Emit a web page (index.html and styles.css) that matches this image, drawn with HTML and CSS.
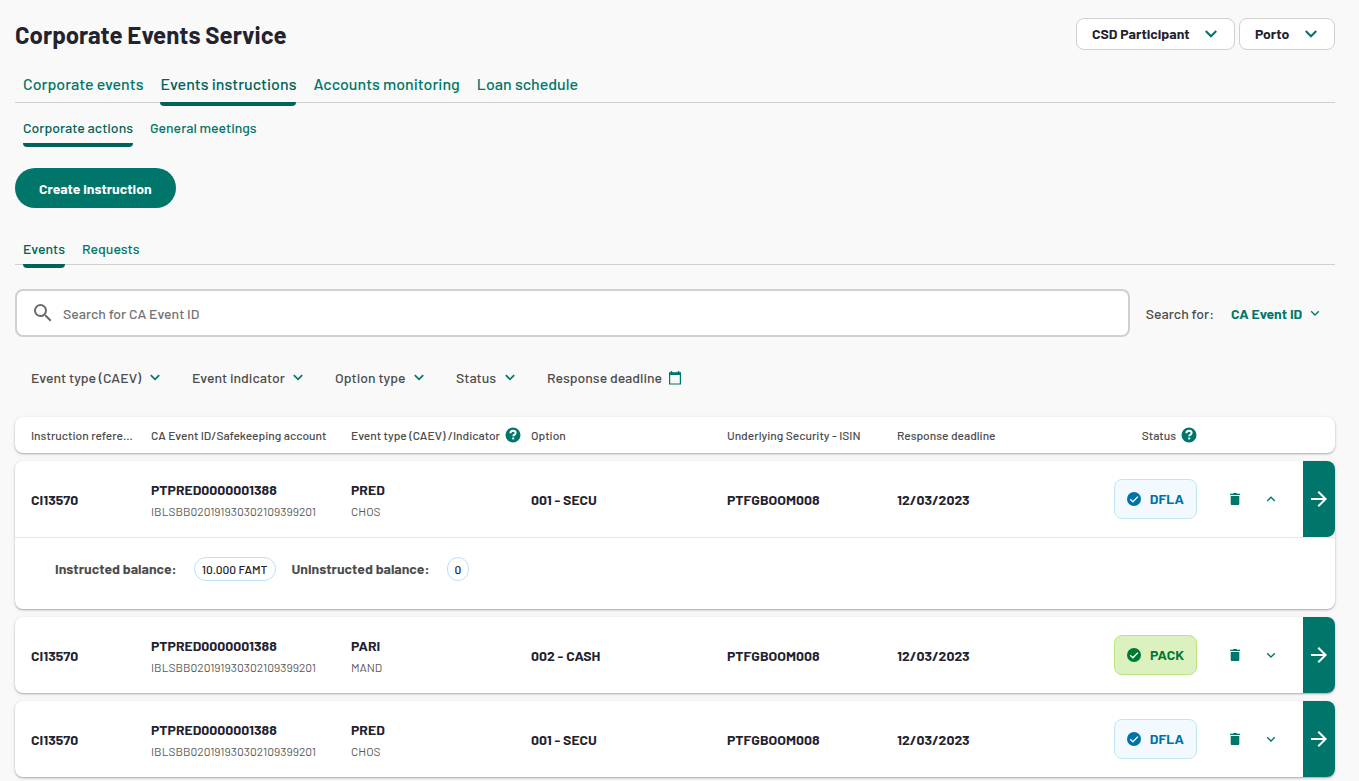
FILE: index.html
```html
<!DOCTYPE html>
<html lang="en">
<head>
<meta charset="utf-8">
<meta name="viewport" content="width=device-width, initial-scale=1">
<title>Corporate Events Service</title>
<link rel="stylesheet" href="styles.css">
</head>
<body>
<svg class="sprite" aria-hidden="true">
  <symbol id="chevron" viewBox="0 0 12 12"><path d="M1.500 3.500 6 8l4.500-4.500" fill="none" stroke="currentColor" stroke-width="1.800"/></symbol>
  <symbol id="chevron-filter" viewBox="0 0 12 12"><path d="M1.800 3.200 6 7.300l4.200-4.100" fill="none" stroke="currentColor" stroke-width="1.700"/></symbol>
  <symbol id="chevron-up" viewBox="0 0 12 12"><path d="M2.200 8 6 4.200 9.800 8" fill="none" stroke="currentColor" stroke-width="1.300"/></symbol>
  <symbol id="chevron-down" viewBox="0 0 12 12"><path d="M2.200 4.200 6 8l3.800-3.800" fill="none" stroke="currentColor" stroke-width="1.300"/></symbol>
  <symbol id="search" viewBox="0 0 24 24"><path d="M15.500 14h-.79l-.28-.27A6.470 6.470 0 0 0 16 9.500 6.500 6.500 0 1 0 9.500 16c1.610 0 3.090-.59 4.230-1.570l.27.28v.79l5 4.990L20.490 19l-4.990-5zm-6 0a4.500 4.500 0 1 1 0-9 4.500 4.500 0 0 1 0 9z" fill="currentColor"/></symbol>
  <symbol id="calendar" viewBox="0 0 14 14"><path d="M3.500 0v2M10.500 0v2" stroke="currentColor" stroke-width="1.400"/><path d="M1.600 2h10.800v11H1.600z" fill="none" stroke="currentColor" stroke-width="1.200"/><path d="M1 1.400h12V4H1z" fill="currentColor"/></symbol>
  <symbol id="help" viewBox="0 0 16 16"><circle cx="8" cy="8" r="7.500" fill="currentColor"/><path d="M5.400 6.200C5.400 4.600 6.500 3.700 8 3.700s2.600.9 2.600 2.200c0 1.600-2.300 1.800-2.400 3.400" fill="none" stroke="#fff" stroke-width="2"/><path d="M7.200 10.500h2v1.900h-2z" fill="#fff"/></symbol>
  <symbol id="check" viewBox="0 0 14 14"><circle cx="7" cy="7" r="7" fill="currentColor"/><path d="M3.200 7.200 5.900 9.800l5-5.200" fill="none" stroke="#fff" stroke-width="1.300"/></symbol>
  <symbol id="trash" viewBox="0 0 10 12"><path d="M0 .7h2.800L3.500 0h3l.7.7H10V2H0zM.7 3h8.600v7.700c0 .7-.6 1.300-1.300 1.300H2c-.7 0-1.300-.6-1.300-1.300z" fill="currentColor"/></symbol>
  <symbol id="arrow" viewBox="0 0 16 16"><path d="M0 8h14.600M7.300.700 14.600 8l-7.300 7.300" fill="none" stroke="currentColor" stroke-width="2"/></symbol>
</svg>
<main class="page">
  <header class="header">
    <h1 class="title">Corporate Events Service</h1>
    <div class="context">
      <span class="picker picker--boxed">
        <select aria-label="Role"><option>CSD Participant</option></select>
        <svg class="picker-icon"><use href="#chevron"/></svg>
      </span>
      <span class="picker picker--boxed">
        <select aria-label="Location"><option>Porto</option></select>
        <svg class="picker-icon"><use href="#chevron"/></svg>
      </span>
    </div>
  </header>

  <nav class="tabs tabs--main" aria-label="Sections">
    <a class="tab" href="#">Corporate events</a>
    <a class="tab tab--active" href="#" aria-current="page">Events instructions</a>
    <a class="tab" href="#">Accounts monitoring</a>
    <a class="tab" href="#">Loan schedule</a>
  </nav>
  <nav class="tabs tabs--sub" aria-label="Instruction types">
    <a class="tab tab--active" href="#" aria-current="page">Corporate actions</a>
    <a class="tab" href="#">General meetings</a>
  </nav>

  <button class="create" type="button">Create instruction</button>

  <nav class="tabs tabs--list" aria-label="Lists">
    <a class="tab tab--active" href="#" aria-current="page">Events</a>
    <a class="tab" href="#">Requests</a>
  </nav>

  <form class="search-row">
    <div class="search-box">
      <svg class="search-icon"><use href="#search"/></svg>
      <input class="search-input" type="search" aria-label="Search" placeholder="Search for CA Event ID">
    </div>
    <div class="search-by">
      <label for="search-by">Search for:</label>
      <span class="picker picker--link">
        <select id="search-by"><option>CA Event ID</option></select>
        <svg class="picker-icon"><use href="#chevron-down"/></svg>
      </span>
    </div>
  </form>

  <div class="filters">
    <span class="picker"><select aria-label="Event type"><option>Event type (CAEV)</option></select><svg class="picker-icon"><use href="#chevron-filter"/></svg></span>
    <span class="picker"><select aria-label="Event indicator"><option>Event indicator</option></select><svg class="picker-icon"><use href="#chevron-filter"/></svg></span>
    <span class="picker"><select aria-label="Option type"><option>Option type</option></select><svg class="picker-icon"><use href="#chevron-filter"/></svg></span>
    <span class="picker"><select aria-label="Status"><option>Status</option></select><svg class="picker-icon"><use href="#chevron-filter"/></svg></span>
    <button class="date-filter" type="button">Response deadline <svg class="calendar-icon"><use href="#calendar"/></svg></button>
  </div>

  <table class="events">
    <thead class="card">
      <tr class="row row--head">
        <th scope="col">Instruction reference</th>
        <th scope="col">CA Event ID/Safekeeping account</th>
        <th scope="col" class="with-help">Event type (CAEV) /Indicator <svg class="help-icon"><use href="#help"/></svg></th>
        <th scope="col">Option</th>
        <th scope="col">Underlying Security - ISIN</th>
        <th scope="col">Response deadline</th>
        <th scope="col" class="status with-help">Status <svg class="help-icon"><use href="#help"/></svg></th>
      </tr>
    </thead>
    <tbody class="card">
      <tr class="row">
        <td>CI13570</td>
        <td>PTPRED0000001388<small>IBLSBB020191930302109399201</small></td>
        <td>PRED<small>CHOS</small></td>
        <td>001 - SECU</td>
        <td>PTFGBOOM008</td>
        <td>12/03/2023</td>
        <td class="status"><span class="badge badge--blue"><svg class="check-icon"><use href="#check"/></svg>DFLA</span></td>
        <td class="action"><button class="icon-button" type="button" aria-label="Delete"><svg class="trash-icon"><use href="#trash"/></svg></button></td>
        <td class="action"><button class="icon-button" type="button" aria-label="Collapse" aria-expanded="true"><svg class="toggle-icon"><use href="#chevron-up"/></svg></button></td>
        <td class="open"><button class="open-button" type="button" aria-label="Open"><svg class="arrow-icon"><use href="#arrow"/></svg></button></td>
      </tr>
      <tr class="detail">
        <td class="balances" colspan="10">
          <span class="balance">Instructed balance: <span class="pill">10.000 FAMT</span></span>
          <span class="balance">Uninstructed balance: <span class="pill">0</span></span>
        </td>
      </tr>
    </tbody>
    <tbody class="card">
      <tr class="row">
        <td>CI13570</td>
        <td>PTPRED0000001388<small>IBLSBB020191930302109399201</small></td>
        <td>PARI<small>MAND</small></td>
        <td>002 - CASH</td>
        <td>PTFGBOOM008</td>
        <td>12/03/2023</td>
        <td class="status"><span class="badge badge--green"><svg class="check-icon"><use href="#check"/></svg>PACK</span></td>
        <td class="action"><button class="icon-button" type="button" aria-label="Delete"><svg class="trash-icon"><use href="#trash"/></svg></button></td>
        <td class="action"><button class="icon-button" type="button" aria-label="Expand" aria-expanded="false"><svg class="toggle-icon"><use href="#chevron-down"/></svg></button></td>
        <td class="open"><button class="open-button" type="button" aria-label="Open"><svg class="arrow-icon"><use href="#arrow"/></svg></button></td>
      </tr>
    </tbody>
    <tbody class="card">
      <tr class="row">
        <td>CI13570</td>
        <td>PTPRED0000001388<small>IBLSBB020191930302109399201</small></td>
        <td>PRED<small>CHOS</small></td>
        <td>001 - SECU</td>
        <td>PTFGBOOM008</td>
        <td>12/03/2023</td>
        <td class="status"><span class="badge badge--blue"><svg class="check-icon"><use href="#check"/></svg>DFLA</span></td>
        <td class="action"><button class="icon-button" type="button" aria-label="Delete"><svg class="trash-icon"><use href="#trash"/></svg></button></td>
        <td class="action"><button class="icon-button" type="button" aria-label="Expand" aria-expanded="false"><svg class="toggle-icon"><use href="#chevron-down"/></svg></button></td>
        <td class="open"><button class="open-button" type="button" aria-label="Open"><svg class="arrow-icon"><use href="#arrow"/></svg></button></td>
      </tr>
    </tbody>
  </table>
</main>
</body>
</html>
```
FILE: styles.css
```css
:root {
  --teal: #00766a;
  --teal-dark: #00635a;
  --ink: #23222f;
  --grey: #4c4c4c;
  --line: #d0d0d0;
}
* { box-sizing: border-box; }
body {
  margin: 0;
  background: #f9f9f9;
  color: var(--ink);
  font: 14px/20px Barlow, Roboto, sans-serif;
}
button, input, select {
  font: inherit;
  color: inherit;
  background: none;
  border: 0;
  padding: 0;
  margin: 0;
}
button, select { cursor: pointer; }
svg { flex: none; display: block; }
.sprite { position: absolute; width: 0; height: 0; }
.page { padding: 18px 24px 4px 15px; }

.header { display: flex; justify-content: space-between; align-items: center; height: 32px; }
.title { margin: 0; padding-top: 2px; font-size: 24px; line-height: 32px; font-weight: 700; }
.context { display: flex; gap: 4px; }

/* Drop-downs: the chevron shares the select's grid cell */
.picker { display: inline-grid; align-items: center; }
.picker > * { grid-area: 1 / 1; }
.picker select { appearance: none; height: 32px; padding-right: 19px; }
.picker-icon { width: 12px; height: 12px; justify-self: end; color: var(--teal); pointer-events: none; }
.picker--boxed { background: #fff; border: 1px solid var(--line); border-radius: 8px; font-weight: 700; }
.picker--boxed select { height: 30px; padding: 0 44px 0 15px; }
.picker--boxed .picker-icon { width: 14px; height: 14px; margin-right: 16px; }
.picker--link { color: var(--teal); font-weight: 700; }
.picker--link select { padding: 2px 18px 0 0; }

.tabs { display: flex; gap: 17px; padding: 0 8px; font-weight: 500; }
.tab { position: relative; display: flex; align-items: center; height: 30px; color: var(--teal); text-decoration: none; white-space: nowrap; }
.tab--active { color: var(--teal-dark); }
.tab--active::after {
  content: "";
  position: absolute;
  top: 100%;
  left: 0;
  right: 0;
  height: 4px;
  background: var(--teal-dark);
  border-radius: 0 0 4px 4px;
}
.tabs--main { margin-top: 18px; border-bottom: 1px solid var(--line); font-size: 16px; }
.tabs--main .tab { height: 34px; padding-bottom: 2px; }
.tabs--sub { margin-top: 10px; }
.tabs--list { margin-top: 26px; border-bottom: 1px solid var(--line); }

.create { display: block; margin-top: 25px; height: 40px; padding: 2px 24px 0; border-radius: 20px; background: var(--teal); color: #fff; font-weight: 700; }

.search-row { display: flex; align-items: center; gap: 16px; margin-top: 24px; }
.search-box { flex: 1; display: flex; align-items: center; gap: 8px; height: 48px; padding: 0 14px; background: #fff; border: 2px solid var(--line); border-radius: 8px; }
.search-icon { width: 24px; height: 24px; color: #6b6b6b; }
.search-input { flex: 1; min-width: 0; height: 40px; outline: 0; appearance: none; font-weight: 500; }
.search-input::placeholder { color: #737373; opacity: 1; }
.search-by { display: flex; align-items: center; gap: 17px; padding-right: 14px; color: var(--grey); font-weight: 500; }
.search-by label { padding-top: 2px; }

.filters { display: flex; align-items: center; gap: 31px; height: 34px; margin-top: 24px; padding: 0 16px; color: var(--grey); font-weight: 500; }
.date-filter { display: flex; align-items: center; gap: 6px; }
.calendar-icon { width: 14px; height: 14px; color: var(--teal); }

.events { display: flex; flex-direction: column; gap: 8px; margin-top: 22px; }
.card { display: block; background: #fff; border-radius: 8px; box-shadow: 0 1px 2px rgba(0, 0, 0, .3), 0 1px 6px rgba(0, 0, 0, .05); }
.row {
  display: grid;
  grid-template-columns: 120px 200px 180px 196fr 170fr 190fr 110fr 56px 36px 46px;
  align-items: center;
  height: 76px;
  padding-left: 16px;
  font-weight: 700;
}
.row--head { height: 36px; font-size: 12px; line-height: 16px; color: var(--grey); }
.row th { padding: 0 16px 0 0; font-weight: 500; text-align: left; white-space: nowrap; overflow: hidden; text-overflow: ellipsis; }
.row td { padding: 2px 0 0; }
.row small { display: block; margin-top: 2px; font-size: 12px; line-height: 18px; font-weight: 400; color: #5c5c5c; }
.row .with-help { display: flex; align-items: center; gap: 5px; padding: 0; }
.help-icon { width: 16px; height: 16px; color: var(--teal); }
.row .status { display: flex; justify-content: flex-end; padding: 0; }

.badge { display: inline-flex; align-items: center; gap: 9px; height: 40px; padding: 0 12px; border: 1px solid; border-radius: 8px; }
.badge--blue { color: #0072a8; background: #f3faff; border-color: #c2e5f4; }
.badge--green { color: #007a33; background: #dbf1c0; border-color: #b9e57c; }
.check-icon { width: 14px; height: 14px; }

.row .action { display: flex; justify-content: flex-end; padding: 0; }
.icon-button { display: grid; place-items: center; width: 36px; height: 36px; color: var(--teal); }
.trash-icon { width: 10px; height: 12px; }
.toggle-icon { width: 12px; height: 12px; }
.row .open { align-self: stretch; display: flex; justify-content: flex-end; padding: 0; }
.open-button { display: grid; place-items: center; width: 32px; background: var(--teal); color: #fff; border-radius: 0 8px 8px 0; }
.arrow-icon { width: 16px; height: 16px; }

.detail { display: block; border-top: 1px solid #e6e6e6; }
.balances { display: flex; align-items: center; gap: 16px; padding: 19px 40px 28px; color: var(--grey); font-weight: 700; }
.balance { display: flex; align-items: center; gap: 17px; }
.pill { height: 24px; padding: 0 7px; border: 1px solid #b9e2f5; border-radius: 12px; font-size: 12px; line-height: 22px; font-weight: 500; color: var(--ink); }
```
